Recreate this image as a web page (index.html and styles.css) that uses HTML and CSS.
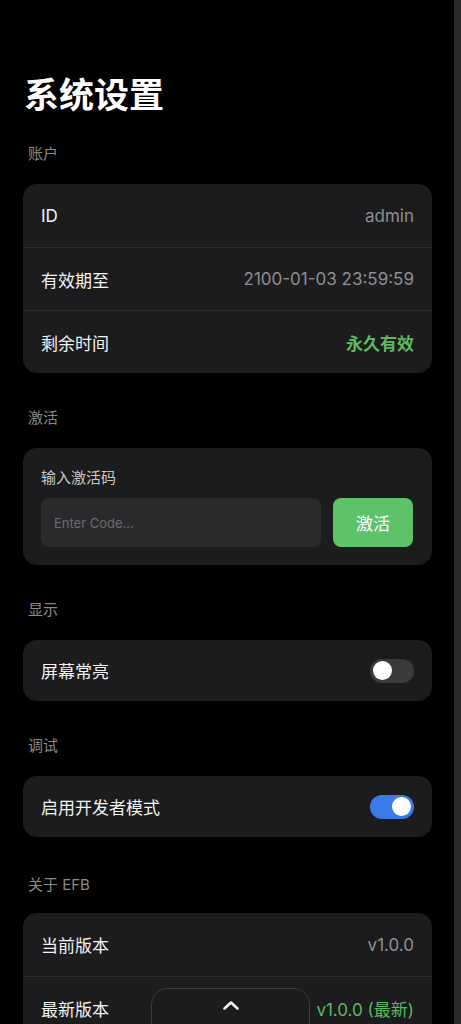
FILE: index.html
```html
<!DOCTYPE html>
<html lang="zh-CN">
<head>
  <meta charset="UTF-8" />
  <meta name="viewport" content="width=device-width, initial-scale=1" />
  <title>系统设置</title>
  <link rel="stylesheet" href="styles.css">
</head>
<body>

<div class="page">
  <h1>系统设置</h1>

  <div class="section-label first">账户</div>
  <div class="card">
    <div class="row">
      <span class="row-name">ID</span>
      <span class="row-value">admin</span>
    </div>
    <div class="row">
      <span class="row-name">有效期至</span>
      <span class="row-value">2100-01-03 23:59:59</span>
    </div>
    <div class="row">
      <span class="row-name">剩余时间</span>
      <span class="row-value ok-bold">永久有效</span>
    </div>
  </div>

  <div class="section-label">激活</div>
  <div class="card activate">
    <div class="activate-title">输入激活码</div>
    <div class="activate-form">
      <input type="text" class="code-input" placeholder="Enter Code...">
      <button class="activate-btn">激活</button>
    </div>
  </div>

  <div class="section-label">显示</div>
  <div class="card">
    <div class="row short">
      <span class="row-name">屏幕常亮</span>
      <span class="switch"><span class="knob"></span></span>
    </div>
  </div>

  <div class="section-label">调试</div>
  <div class="card">
    <div class="row short">
      <span class="row-name">启用开发者模式</span>
      <span class="switch on"><span class="knob"></span></span>
    </div>
  </div>

  <div class="section-label about">关于 EFB</div>
  <div class="card">
    <div class="row">
      <span class="row-name">当前版本</span>
      <span class="row-value">v1.0.0</span>
    </div>
    <div class="row">
      <span class="row-name">最新版本</span>
      <span class="row-value ok">v1.0.0 (最新)</span>
    </div>
  </div>
</div>

<div class="drawer-tab">
  <svg width="18" height="12" viewBox="0 0 18 12">
    <path d="M2.5 9.5 L9 3.5 L15.5 9.5" fill="none" stroke="#f2f2f2" stroke-width="2.6" stroke-linecap="round" stroke-linejoin="round"/>
  </svg>
</div>

<div class="scrollbar"></div>

</body>
</html>
```

FILE: styles.css
```css
html, body {
  margin: 0;
  padding: 0;
  background: #000;
  overflow: hidden;
}
body {
  font-family: Inter, "Noto Sans CJK SC", sans-serif;
  color: #f2f2f2;
}
.page {
  width: 454px;
  box-sizing: border-box;
  padding: 73px 22px 120px 23px;
}
h1 {
  margin: 0;
  padding-left: 1px;
  font-size: 35px;
  line-height: 44px;
  font-weight: 600;
  color: #fff;
}
.section-label {
  margin: 35px 0 20px;
  padding-left: 5px;
  font-size: 15px;
  line-height: 20px;
  color: #8a8a8a;
}
.section-label.first {
  margin-top: 27px;
}
.section-label.about {
  margin: 38px 0 18px;
}
.card {
  background: #1c1c1e;
  border-radius: 14px;
  overflow: hidden;
}
.row {
  display: flex;
  align-items: center;
  justify-content: space-between;
  height: 63px;
  box-sizing: border-box;
  padding: 0 18px;
  font-size: 17px;
}
.row + .row {
  border-top: 1px solid #2c2c2e;
}
.row.short {
  height: 61px;
}
.row-name {
  color: #f2f2f2;
}
.row-value {
  color: #8e8e93;
}
.ok {
  color: #5cb860;
}
.ok-bold {
  color: #5cb860;
  font-weight: 700;
}
.activate {
  padding: 18px 19px 18px 18px;
}
.activate-title {
  font-size: 15px;
  line-height: 24px;
  color: #c8c8c8;
  margin-bottom: 8px;
}
.activate-form {
  display: flex;
  gap: 12px;
}
.code-input {
  flex: 1;
  min-width: 0;
  height: 49px;
  box-sizing: border-box;
  border: none;
  border-radius: 8px;
  background: #2a2a2c;
  padding: 0 13px;
  font-family: inherit;
  font-size: 13px;
  color: #ddd;
  outline: none;
}
.code-input::placeholder {
  color: #6a6a6c;
}
.activate-btn {
  width: 80px;
  height: 49px;
  border: none;
  border-radius: 8px;
  background: #5ec26a;
  color: #fff;
  font-family: inherit;
  font-size: 17px;
}
.switch {
  display: flex;
  align-items: center;
  width: 44px;
  height: 24px;
  box-sizing: border-box;
  padding: 0 3px;
  border-radius: 12px;
  background: #3a3a3c;
}
.switch.on {
  background: #3a7be9;
  justify-content: flex-end;
}
.knob {
  width: 19px;
  height: 19px;
  border-radius: 50%;
  background: #fff;
}
.drawer-tab {
  position: fixed;
  left: 151px;
  bottom: -12px;
  width: 159px;
  height: 48px;
  box-sizing: border-box;
  background: #1c1c1e;
  border: 1px solid #3a3a3c;
  border-radius: 16px 16px 0 0;
  display: flex;
  justify-content: center;
  padding-top: 10px;
}
.scrollbar {
  position: fixed;
  top: 0;
  right: 0;
  width: 7px;
  height: 100%;
  background: #2a2a2a;
}
```
